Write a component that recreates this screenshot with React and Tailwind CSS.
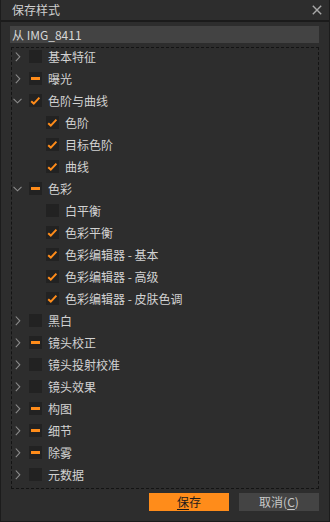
import React from 'react';

const rows = [
  { label: '基本特征', state: 'none', level: 0, arrow: 'right' },
  { label: '曝光', state: 'partial', level: 0, arrow: 'right' },
  { label: '色阶与曲线', state: 'checked', level: 0, arrow: 'down' },
  { label: '色阶', state: 'checked', level: 1 },
  { label: '目标色阶', state: 'checked', level: 1 },
  { label: '曲线', state: 'checked', level: 1 },
  { label: '色彩', state: 'partial', level: 0, arrow: 'down' },
  { label: '白平衡', state: 'none', level: 1 },
  { label: '色彩平衡', state: 'checked', level: 1 },
  { label: '色彩编辑器 - 基本', state: 'checked', level: 1 },
  { label: '色彩编辑器 - 高级', state: 'checked', level: 1 },
  { label: '色彩编辑器 - 皮肤色调', state: 'checked', level: 1 },
  { label: '黑白', state: 'none', level: 0, arrow: 'right' },
  { label: '镜头校正', state: 'partial', level: 0, arrow: 'right' },
  { label: '镜头投射校准', state: 'none', level: 0, arrow: 'right' },
  { label: '镜头效果', state: 'none', level: 0, arrow: 'right' },
  { label: '构图', state: 'partial', level: 0, arrow: 'right' },
  { label: '细节', state: 'partial', level: 0, arrow: 'right' },
  { label: '除雾', state: 'partial', level: 0, arrow: 'right' },
  { label: '元数据', state: 'none', level: 0, arrow: 'right' },
];

function Chevron({ dir }) {
  if (dir === 'down') {
    return (
      <svg width="9" height="6" viewBox="0 0 9 6" className="mt-[6px]">
        <path d="M0.5 0.8 L4.5 4.8 L8.5 0.8" fill="none" stroke="#8c8c8c" strokeWidth="1.1" />
      </svg>
    );
  }
  return (
    <svg width="6" height="10" viewBox="0 0 6 10" className="mt-[4px] ml-[2px]">
      <path d="M0.8 0.5 L4.8 4.8 L0.8 9.1" fill="none" stroke="#8c8c8c" strokeWidth="1.1" />
    </svg>
  );
}

function Box({ state }) {
  return (
    <div className="w-[13px] h-[13px] mt-[2px] bg-[#222222] flex items-center justify-center shrink-0">
      {state === 'checked' && (
        <svg width="13" height="13" viewBox="0 0 13 13">
          <path d="M2.2 7.2 L4.8 9.6 L10.4 3.6" fill="none" stroke="#ff8c1a" strokeWidth="2" />
        </svg>
      )}
      {state === 'partial' && <div className="w-[9px] h-[3px] bg-[#ff8c1a]" />}
    </div>
  );
}

export default function App() {
  return (
    <div
      className="w-[330px] h-[522px] bg-[#2d2d2d] border-l border-r border-b border-[#1c1c1c] text-[12px] text-[#d2d2d2] flex flex-col"
      style={{ fontFamily: '"Noto Sans CJK SC", "Noto Sans", sans-serif' }}
    >
      {/* Title */}
      <div className="h-[20px] flex items-center justify-between pl-[11px] pr-[7px] border-b-2 border-[#1b1b1b] box-content">
        <span className="leading-[20px] text-[#cfcfcf]">保存样式</span>
        <svg width="10" height="10" viewBox="0 0 10 10">
          <path d="M0.8 0.8 L9.2 9.2 M9.2 0.8 L0.8 9.2" stroke="#a8a8a8" strokeWidth="1.4" />
        </svg>
      </div>

      <div className="flex flex-col pl-[9px] pr-[10px]">
        <div className="mt-[4px] h-[17px] bg-[#434343] pl-[2px] leading-[17px] text-[#d6d6d6]">
          从 IMG_8411
        </div>

        <div className="mt-[4px] ml-[1px] border border-dashed border-[#141414]">
          {rows.map((r) => (
            <div key={r.label} className="h-[22px] flex items-start">
              {r.level === 0 ? (
                <>
                  <div className="w-[17px] pl-[1px] flex shrink-0">{r.arrow && <Chevron dir={r.arrow} />}</div>
                  <Box state={r.state} />
                  <span className="ml-[6px] leading-[17px] whitespace-nowrap">{r.label}</span>
                </>
              ) : (
                <>
                  <div className="w-[34px] shrink-0" />
                  <Box state={r.state} />
                  <span className="ml-[6px] leading-[17px] whitespace-nowrap">{r.label}</span>
                </>
              )}
            </div>
          ))}
        </div>

        <div className="mt-[4px] flex justify-end gap-[10px]">
          <button className="w-[80px] h-[18px] bg-[#ff8c1a] text-[#1a1a1a] leading-[18px] text-[12px]">
            <span className="underline underline-offset-2">保</span>存
          </button>
          <button className="w-[80px] h-[18px] bg-[#444444] text-[#c8c8c8] leading-[18px] text-[12px]">
            取消(<span className="underline underline-offset-2">C</span>)
          </button>
        </div>
      </div>
    </div>
  );
}
